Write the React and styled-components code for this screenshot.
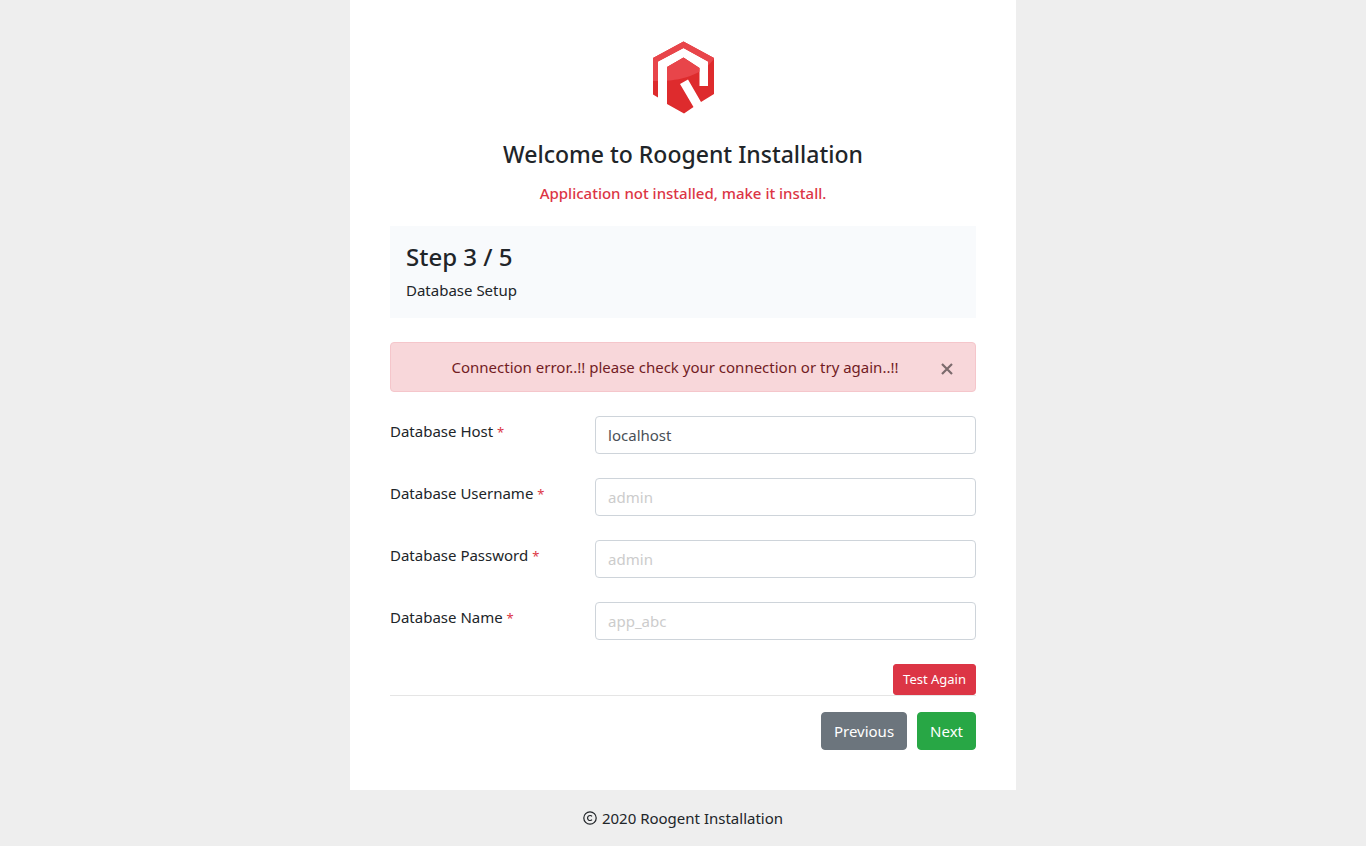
import React, { useState } from 'react';
import styled, { createGlobalStyle } from 'styled-components';

const fields = [
  { id: 'host', label: 'Database Host', value: 'localhost' },
  { id: 'username', label: 'Database Username', placeholder: 'admin' },
  { id: 'password', label: 'Database Password', placeholder: 'admin', type: 'password' },
  { id: 'name', label: 'Database Name', placeholder: 'app_abc' }
]

const Logo = () => (
  <LogoImage viewBox="0 0 62 74" role="img" aria-label="Roogent">
    <defs>
      <clipPath id="mark">
        <path d="M31.500 1.500 62 18V54L49 62 36 39.500 28 44 41.500 67 32 73.500 15 64V27L31.500 17.500 47.500 28V46H56V21.500L31.500 8 6 21.500V57.500L1 54.500V18Z" />
      </clipPath>
    </defs>
    <g clipPath="url(#mark)">
      <rect width="62" height="74" fill="#de2b2d" />
      <path d="M0 0H62V19C49 36 26 42 0 41Z" fill="#e8454a" />
    </g>
  </LogoImage>
)

const App = () => {
  const [showAlert, setShowAlert] = useState(true)

  return (
    <>
      <GlobalStyle />
      <Card>
        <Header>
          <Logo />
          <Title>Welcome to Roogent Installation</Title>
          <Status>Application not installed, make it install.</Status>
        </Header>
        <StepBox>
          <StepTitle>Step 3 / 5</StepTitle>
          <p>Database Setup</p>
        </StepBox>
        {showAlert && (
          <Alert role="alert">
            <AlertText>Connection error..!! please check your connection or try again..!!</AlertText>
            <CloseButton type="button" aria-label="Close" onClick={() => setShowAlert(false)}>
              <svg width="12" height="12" viewBox="0 0 12 12" aria-hidden="true">
                <path d="M1 1 11 11M11 1 1 11" stroke="currentColor" strokeWidth="2.2" />
              </svg>
            </CloseButton>
          </Alert>
        )}
        <form onSubmit={(event) => event.preventDefault()}>
          {fields.map((field) => (
            <FormRow key={field.id}>
              <Label htmlFor={field.id}>{field.label} <Required>*</Required></Label>
              <Input
                id={field.id}
                type={field.type || 'text'}
                defaultValue={field.value}
                placeholder={field.placeholder} />
            </FormRow>
          ))}
          <TestRow>
            <SmallButton type="button" $color="#dc3545">Test Again</SmallButton>
          </TestRow>
          <ButtonRow>
            <Button type="button" $color="#6c757d">Previous</Button>
            <Button type="submit" $color="#28a745">Next</Button>
          </ButtonRow>
        </form>
      </Card>
      <Footer>
        <CopyrightIcon viewBox="0 0 14 14" aria-hidden="true">
          <circle cx="7" cy="7" r="6.200" />
          <path d="M9 5.400A2.500 2.500 0 1 0 9 8.600" />
        </CopyrightIcon>
        <p>2020 Roogent Installation</p>
      </Footer>
    </>
  )
}

export default App

// Styled components
const GlobalStyle = createGlobalStyle`
  *, *::before, *::after {
    box-sizing: border-box;
  }
  body {
    margin: 0;
    background-color: #eee;
    color: #212529;
    font-family: 'Noto Sans', sans-serif;
    font-size: 15px;
    font-weight: 400;
    line-height: 24px;
  }
  h1, h2, p {
    margin: 0;
  }
  button, input {
    font-family: inherit;
  }
`

const Card = styled.main`
  width: 100%;
  max-width: 666px;
  margin: 0 auto;
  padding: 40px;
  background-color: #fff;
`

const Header = styled.header`
  display: flex;
  flex-direction: column;
  align-items: center;
  text-align: center;
  margin-bottom: 21px;
`

const LogoImage = styled.svg`
  width: 62px;
  height: 74px;
  margin-bottom: 26px;
`

const Title = styled.h1`
  font-size: 23px;
  font-weight: 500;
  line-height: 29px;
  margin-bottom: 12px;
`

const Status = styled.p`
  color: #dc3545;
  font-weight: 500;
`

const StepBox = styled.section`
  padding: 16px;
  margin-bottom: 24px;
  background-color: #f8fafc;
`

const StepTitle = styled.h2`
  font-size: 24px;
  font-weight: 500;
  line-height: 30px;
  margin-bottom: 6px;
`

const Alert = styled.div`
  display: flex;
  align-items: center;
  padding: 12px 20px;
  margin-bottom: 24px;
  border: 1px solid #f5c6cb;
  border-radius: 4px;
  background-color: #f8d7da;
  color: #721c24;
`

const AlertText = styled.p`
  flex: 1;
  text-align: center;
`

const CloseButton = styled.button`
  display: flex;
  padding: 4px 2px 0;
  border: none;
  background: none;
  color: #7c6b6d;
  cursor: pointer;
`

const FormRow = styled.div`
  display: grid;
  grid-template-columns: 7fr 13fr;
  align-items: start;
  margin-bottom: 24px;
`

const Label = styled.label`
  padding-top: 3px;
`

const Required = styled.span`
  color: #dc3545;
  font-size: 13px;
`

const Input = styled.input`
  width: 100%;
  height: 38px;
  padding: 6px 12px;
  border: 1px solid #ced4da;
  border-radius: 4px;
  background-color: #fff;
  color: #495057;
  font-size: 15px;
  font-weight: 400;
  line-height: 24px;
  &::placeholder {
    color: #ccc;
    opacity: 1;
  }
`

const TestRow = styled.div`
  display: flex;
  justify-content: flex-end;
  border-bottom: 1px solid #e5e5e5;
  margin-bottom: 16px;
`

const ButtonRow = styled.div`
  display: flex;
  justify-content: flex-end;
  gap: 10px;
`

const Button = styled.button`
  padding: 6px 12px;
  border: 1px solid ${(props) => props.$color};
  border-radius: 4px;
  background-color: ${(props) => props.$color};
  color: #fff;
  font-size: 15px;
  font-weight: 400;
  line-height: 24px;
  cursor: pointer;
`

const SmallButton = styled(Button)`
  padding: 4px 9px;
  border-radius: 3px;
  font-size: 13px;
  line-height: 21px;
`

const Footer = styled.footer`
  display: flex;
  align-items: center;
  justify-content: center;
  gap: 5px;
  padding: 16px;
`

const CopyrightIcon = styled.svg`
  width: 14px;
  height: 14px;
  fill: none;
  stroke: currentColor;
  stroke-width: 1.2;
`
